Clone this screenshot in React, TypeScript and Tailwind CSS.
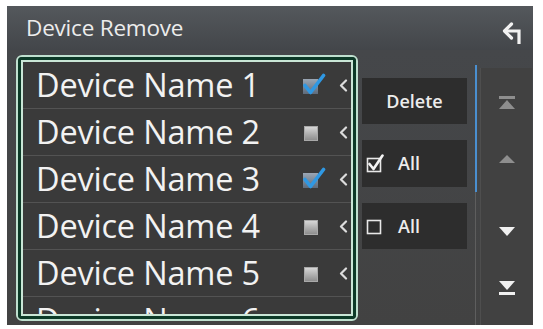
import React from "react";

const devices = [
  { name: "Device Name 1", checked: true },
  { name: "Device Name 2", checked: false },
  { name: "Device Name 3", checked: true },
  { name: "Device Name 4", checked: false },
  { name: "Device Name 5", checked: false },
  { name: "Device Name 6", checked: false },
];

function BackArrow() {
  return (
    <svg width="24" height="26" viewBox="0 0 24 26">
      <path d="M19 24 V11 H5" fill="none" stroke="#f2f2f2" strokeWidth="3.2" strokeLinejoin="miter" />
      <path d="M11.5 4 L4.5 11 L11.5 18" fill="none" stroke="#f2f2f2" strokeWidth="3.2" strokeLinecap="round" strokeLinejoin="round" />
    </svg>
  );
}

function RowCheck({ checked }: { checked: boolean }) {
  if (checked) {
    return (
      <svg width="26" height="24" viewBox="0 0 26 24">
        <defs>
          <linearGradient id="bx" x1="0" y1="0" x2="0" y2="1">
            <stop offset="0" stopColor="#9aa6b4" />
            <stop offset="1" stopColor="#5d6b7c" />
          </linearGradient>
        </defs>
        <rect x="2" y="6" width="15" height="15" fill="url(#bx)" />
        <path d="M4 12.5 L9.5 19.5 L22.5 2.5" fill="none" stroke="#2f98e3" strokeWidth="3.6" strokeLinecap="round" strokeLinejoin="round" />
      </svg>
    );
  }
  return (
    <div className="w-[26px] h-[24px] flex items-center">
      <div className="ml-[3px] mt-[2px] w-[14px] h-[15px] bg-gradient-to-b from-[#d6d6d6] to-[#8e8e8e] border border-[#a9a9a9]" />
    </div>
  );
}

function Chevron() {
  return (
    <svg width="9" height="13" viewBox="0 0 9 13">
      <path d="M7 1.5 L2 6.5 L7 11.5" fill="none" stroke="#dcdcdc" strokeWidth="2.2" strokeLinecap="round" strokeLinejoin="round" />
    </svg>
  );
}

function BoxIcon({ checked }: { checked: boolean }) {
  return (
    <svg width="20" height="20" viewBox="0 0 20 20">
      <rect x="1.5" y="4.5" width="13" height="13" fill="none" stroke="#e8e8e8" strokeWidth="1.6" />
      {checked && (
        <path d="M3.5 10 L7.5 15 L16.5 1.5" fill="none" stroke="#f4f4f4" strokeWidth="2.6" strokeLinecap="round" strokeLinejoin="round" />
      )}
    </svg>
  );
}

function ScrollIcon({ kind, dim }: { kind: "top" | "up" | "down" | "bottom"; dim?: boolean }) {
  const c = dim ? "#8e8e8e" : "#f0f0f0";
  return (
    <svg width="18" height="16" viewBox="0 0 18 16">
      {kind === "top" && (
        <>
          <rect x="1" y="1" width="16" height="3" fill={c} />
          <path d="M9 5 L17 14 H1 Z" fill={c} />
        </>
      )}
      {kind === "up" && <path d="M9 4 L17 12 H1 Z" fill={c} />}
      {kind === "down" && <path d="M1 3 H17 L9 12 Z" fill={c} />}
      {kind === "bottom" && (
        <>
          <path d="M1 1 H17 L9 10 Z" fill={c} />
          <rect x="1" y="12" width="16" height="3" fill={c} />
        </>
      )}
    </svg>
  );
}

export default function App() {
  return (
    <div className="w-[543px] h-[329px] bg-white pl-[7px] pt-[6px] overflow-hidden" style={{ fontFamily: "'Open Sans', 'Noto Sans', sans-serif" }}>
      <div className="w-[526px] h-[319px] bg-[#454545] flex flex-col overflow-hidden">
        <div className="h-[44px] shrink-0 flex items-center justify-between pl-[19px] pr-[9px] bg-gradient-to-b from-[#54585c] to-[#43464a]">
          <span className="text-[22.5px] leading-none text-[#ececec] tracking-[-0.2px]">Device Remove</span>
          <div className="mt-[10px]">
            <BackArrow />
          </div>
        </div>

        <div className="flex-1 flex items-start bg-gradient-to-b from-[#45474a] to-[#424242]">
          <div className="ml-[9px] mt-[5px] w-[342px] h-[266px] border-2 border-[#bfe0cf] rounded-[6px]">
            <div className="h-full border-[3px] border-[#0c3a27] rounded-[4px]">
              <div className="h-full border-2 border-[#c9e6d6] bg-[#3a3a3a] overflow-hidden">
                {devices.map((d) => (
                  <div key={d.name} className="h-[47px] border-b border-[#535353] flex items-center pl-[13px] pr-[2px]">
                    <span className="flex-1 whitespace-nowrap text-[32.5px] leading-none text-[#f2f2f2] tracking-[-0.2px]">{d.name}</span>
                    <RowCheck checked={d.checked} />
                    <div className="ml-[12px] mr-[1px]">
                      <Chevron />
                    </div>
                  </div>
                ))}
              </div>
            </div>
          </div>

          <div className="ml-[4px] mt-[28px] w-[105px] flex flex-col gap-[16px]">
            <div className="h-[46px] bg-[#2d2d2d] flex items-center justify-center">
              <span className="text-[18px] font-semibold text-[#ececec]">Delete</span>
            </div>
            <div className="h-[47px] bg-[#2d2d2d] flex items-center pl-[4px] gap-[12px]">
              <BoxIcon checked />
              <span className="text-[18px] font-semibold text-[#ececec]">All</span>
            </div>
            <div className="h-[46px] bg-[#2d2d2d] flex items-center pl-[4px] gap-[12px]">
              <BoxIcon checked={false} />
              <span className="text-[18px] font-semibold text-[#ececec]">All</span>
            </div>
          </div>

          <div className="ml-[8px] mt-[15px] self-stretch w-[2px] flex flex-col">
            <div className="h-[127px] bg-[#4a8fd0]" />
            <div className="flex-1 w-px bg-[#5e5e5e]" />
          </div>

          <div className="ml-[3px] mt-[18px] self-stretch w-[52px] bg-[#414141] border-l border-[#4e4e4e] flex flex-col items-center">
            <div className="mt-[27px]">
              <ScrollIcon kind="top" dim />
            </div>
            <div className="mt-[40px]">
              <ScrollIcon kind="up" dim />
            </div>
            <div className="mt-[57px]">
              <ScrollIcon kind="down" />
            </div>
            <div className="mt-[40px]">
              <ScrollIcon kind="bottom" />
            </div>
          </div>
        </div>
      </div>
    </div>
  );
}
